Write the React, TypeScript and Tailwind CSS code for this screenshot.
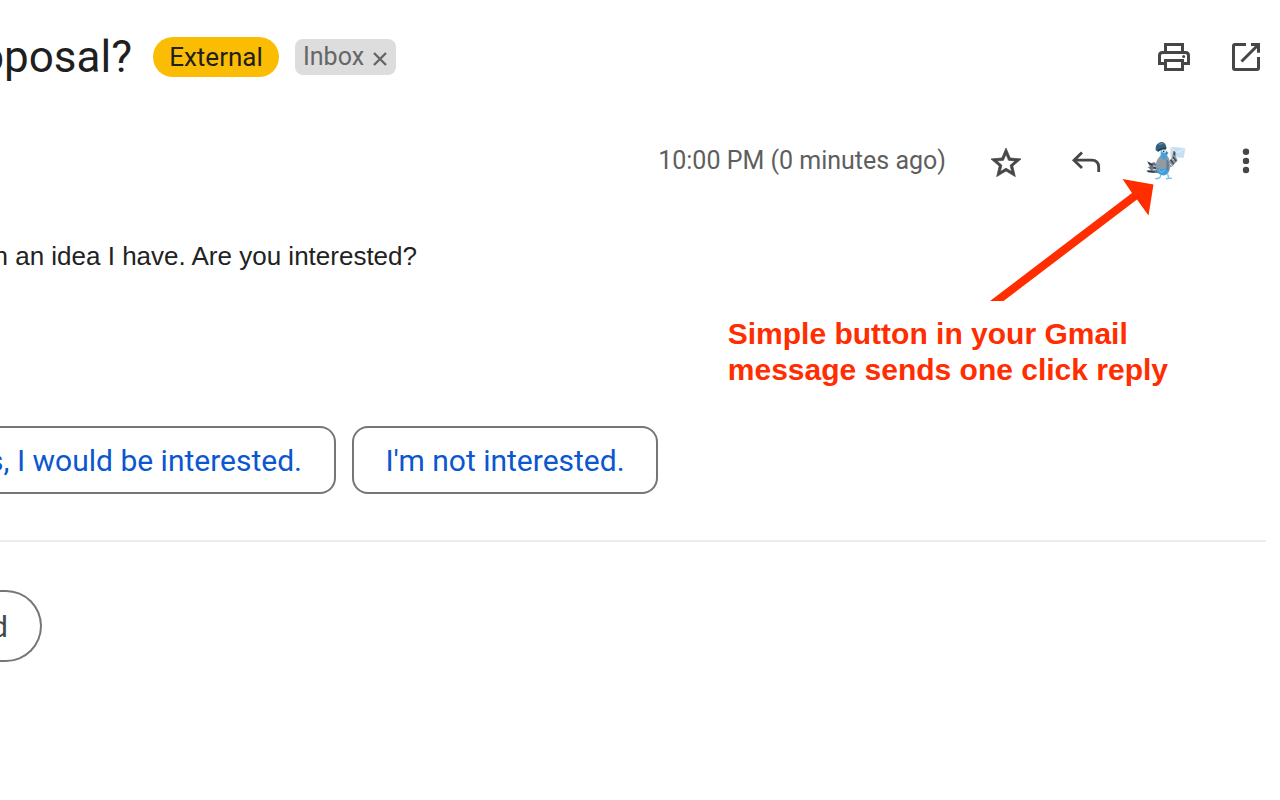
import React from 'react';

const PrintIcon: React.FC = () => (
    <svg viewBox="0 0 40 40" className="size-10" fill="none" stroke="#444746" strokeWidth="3" aria-hidden="true">
        <path d="M11.5 15.5v-8h17v8" />
        <path d="M11.5 26.5h-6v-8q0-3 3-3h23q3 0 3 3v8h-6" />
        <path d="M11.5 23.5h17v9h-17z" />
        <circle cx="29.7" cy="19.6" r="1.5" fill="#444746" stroke="none" />
    </svg>
);

const OpenIcon: React.FC = () => (
    <svg viewBox="0 0 40 40" className="size-10" fill="none" stroke="#444746" strokeWidth="3" aria-hidden="true">
        <path d="M20 7.5H9q-1.5 0-1.5 1.5v22q0 1.5 1.5 1.5h22q1.5 0 1.5-1.5V20" />
        <path d="M25 7.5h7.500v8.200M32 8L15.500 24.500" />
    </svg>
);

const StarIcon: React.FC = () => (
    <svg viewBox="0 0 40 40" className="size-10" fill="#444746" stroke="#444746" strokeWidth="0.5" aria-hidden="true">
        <path
            transform="translate(2 4.100) scale(1.500)"
            d="M22 9.240l-7.190-.620L12 2 9.190 8.630 2 9.240l5.460 4.730L5.820 21 12 17.270 18.180 21l-1.630-7.030L22 9.240zM12 15.400l-3.760 2.270 1-4.280-3.320-2.880 4.380-.380L12 6.100l1.710 4.040 4.380.380-3.320 2.880 1 4.280L12 15.400z"
        />
    </svg>
);

const ReplyIcon: React.FC = () => (
    <svg viewBox="0 0 40 40" className="size-10" fill="none" stroke="#444746" strokeWidth="2.8" aria-hidden="true">
        <path d="M16 11.500L8 19.200L16 27" />
        <path d="M8 19.200h17.500q7.200 0 7.200 7.200V31" />
    </svg>
);

const MoreIcon: React.FC = () => (
    <svg viewBox="0 0 40 40" className="size-10" fill="#444746" aria-hidden="true">
        <circle cx="20" cy="10.700" r="3.200" />
        <circle cx="20" cy="19.900" r="3.200" />
        <circle cx="20" cy="29" r="3.200" />
    </svg>
);

// Carrier pigeon with a cap and a letter
const PigeonIcon: React.FC = () => (
    <svg viewBox="48 33 120 120" className="size-10" aria-hidden="true">
        <path d="M122 50l44 4-5 30-40-4z" fill="#c5e0f4" />
        <path d="M122 51l18 17 26-13" fill="none" stroke="#e5f2fb" strokeWidth="3" />
        <path d="M51 94l13 6 9-4 13 14 2 20-16-2-22-3 1-4 12-1-10-9 7-1z" fill="#69747e" />
        <path d="M55 98l11 7M64 102l14 15M54 125l20 1" stroke="#2a3640" strokeWidth="4" />
        <path d="M68 107l9 3M68 120l12-2" stroke="#c0c8ce" strokeWidth="4" />
        <path d="M92 76c-6 8-14 14-14 30 0 18 8 30 22 30s20-12 20-27c0-14-1-24-8-32z" fill="#929ba3" />
        <path d="M79 112l13 6 26-3c-2 13-8 21-18 21-11 0-19-10-21-24z" fill="#3d9fdf" />
        <path d="M86 118l8 10 12-9" fill="none" stroke="#73c0ee" strokeWidth="3" />
        <path d="M108 86l9 10-1 22-7 4c-1-10 2-22-1-36z" fill="#5c7f9b" />
        <path d="M92 60h18l3 10-4 16-8 4-9-8z" fill="#43a2dc" />
        <path d="M94 62l8-4 9 3-5 7-10-1z" fill="#e5eff2" />
        <circle cx="101" cy="64" r="2.500" fill="#25323a" />
        <path d="M108 66l8 3-7 3z" fill="#526674" />
        <path d="M78 62c-4-14 4-24 17-26 7 0 10 4 13 11l2 8-14 1-12 7z" fill="#32617f" />
        <path d="M82 64c4-8 14-12 27-10l-2 5c-10-2-16 0-23 7z" fill="#1e3a50" />
        <path d="M87 43l13-3" stroke="#5990b0" strokeWidth="4" />
        <path d="M116 95l10-14 2-10 6-9 5 8-2 9 6 12-7 8-8 10-10 4z" fill="#929ba3" />
        <path d="M129 81l10 13M122 90l9 12M132 64l1 12" stroke="#38444e" strokeWidth="4" />
        <path d="M119 101l7 7M127 86l4 4" stroke="#d2d8dc" strokeWidth="3" />
        <path d="M93 134l-4 10-13 3M113 132l3 12 10 2M117 144l-9 3" fill="none" stroke="#79c1e6" strokeWidth="4" />
    </svg>
);

const App: React.FC = () => {
    return (
        <main className="relative min-h-screen overflow-hidden bg-white font-[Roboto,sans-serif] text-[#1f1f1f]">
            <header className="flex h-[114px] items-center pr-[14px]">
                <h1 className="flex w-[132px] shrink-0 justify-end overflow-hidden whitespace-nowrap text-[44px] leading-[60px]">
                    oposal?
                </h1>
                <span className="ml-[21px] flex h-10 w-[126px] items-center justify-center rounded-full bg-[#fbbc04] text-[26px]">
                    External
                </span>
                <div className="ml-4 flex h-9 w-[101px] items-center justify-between rounded-lg bg-[#ddd] px-2 text-[25px] text-[#666]">
                    <span>Inbox</span>
                    <button type="button" aria-label="Remove label Inbox">
                        <svg viewBox="0 0 16 16" className="mt-1 size-4" stroke="#666" strokeWidth="2.4" aria-hidden="true">
                            <path d="M2 2l12 12M14 2L2 14" />
                        </svg>
                    </button>
                </div>
                <div className="ml-auto flex gap-8">
                    <button type="button" aria-label="Print"><PrintIcon /></button>
                    <button type="button" aria-label="Open in new window"><OpenIcon /></button>
                </div>
            </header>

            <div className="flex h-[94px] items-center justify-end gap-10 pr-[14px]">
                <time className="text-[25px] text-[#5e5e5e]">10:00 PM (0 minutes ago)</time>
                <button type="button" aria-label="Star"><StarIcon /></button>
                <button type="button" aria-label="Reply"><ReplyIcon /></button>
                <button type="button" aria-label="Send one click reply"><PigeonIcon /></button>
                <button type="button" aria-label="More"><MoreIcon /></button>
            </div>

            {/* Arrow that points at the pigeon button */}
            <svg viewBox="990 178 164 124" className="absolute top-[178px] right-[126px] h-[124px] w-[164px]" aria-hidden="true">
                <path d="M990 301L1132 193L1122.500 179L1153.500 184.500L1148.500 215.500L1137 199.500L1003.500 301z" fill="#ff2d00" />
            </svg>

            <section className="flex items-start justify-between pr-[112px]">
                <div className="mt-[30px] flex w-[417px] justify-end overflow-hidden whitespace-nowrap font-['Liberation_Sans',sans-serif] text-[26px] leading-9 text-[#222]">
                    n an idea I have. Are you interested?
                </div>
                <p className="mt-[108px] font-['Liberation_Sans',sans-serif] text-[30px] leading-9 font-bold text-[#ff2d00]">
                    Simple button in your Gmail
                    <br />
                    message sends one click reply
                </p>
            </section>

            <div className="mt-[38px] flex gap-4 text-[30px] text-[#0b57d0]">
                <button
                    type="button"
                    className="flex h-[68px] w-[336px] items-center justify-end overflow-hidden rounded-r-2xl border-2 border-l-0 border-[#747775] pr-8 whitespace-nowrap"
                >
                    s, I would be interested.
                </button>
                <button type="button" className="h-[68px] w-[306px] rounded-2xl border-2 border-[#747775] whitespace-nowrap">
                    I'm not interested.
                </button>
            </div>

            <hr className="mt-[46px] mr-[14px] border-t-2 border-[#ececec]" />

            <button
                type="button"
                className="mt-12 flex h-[72px] w-[42px] items-center justify-end overflow-hidden rounded-r-full border-2 border-l-0 border-[#747775] pr-8 text-[30px] text-[#444746]"
            >
                d
            </button>
        </main>
    );
};

export default App;
